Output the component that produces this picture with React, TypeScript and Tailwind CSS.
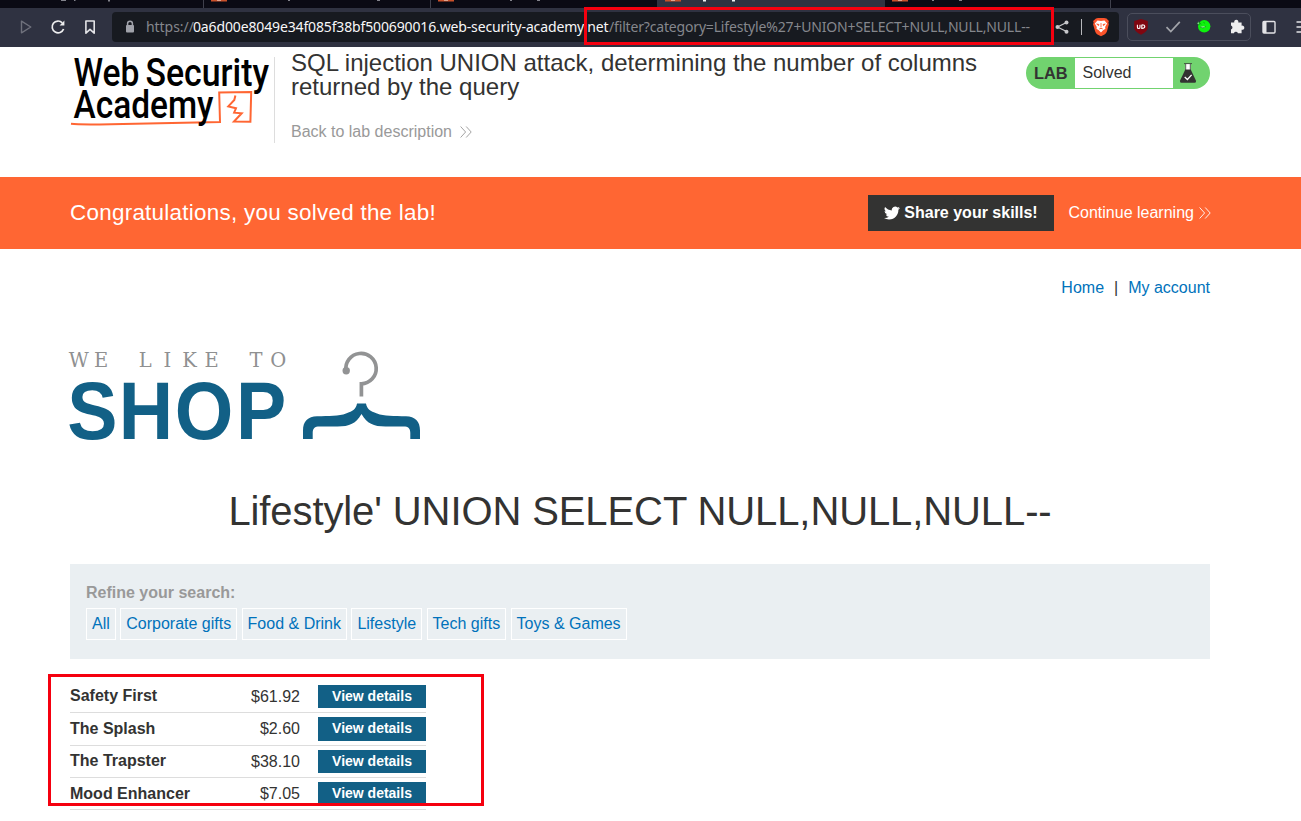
import React from "react";

const categories = ["All", "Corporate gifts", "Food & Drink", "Lifestyle", "Tech gifts", "Toys & Games"];

const products = [
  { name: "Safety First", price: "$61.92" },
  { name: "The Splash", price: "$2.60" },
  { name: "The Trapster", price: "$38.10" },
  { name: "Mood Enhancer", price: "$7.05" },
];

function TabStrip() {
  return (
    <div className="h-2 w-full bg-[#0a0a14]">
      <svg width="1301" height="8" viewBox="0 0 1301 8">
        <rect x="657" width="228" height="8" fill="#2f3241" />
        <g fill="#3f404c">
          <rect x="203" width="1" height="8" />
          <rect x="430" width="1" height="8" />
          <rect x="1110" width="1" height="8" />
        </g>
        <g fill="#c9502a">
          <rect x="211" width="16" height="1.5" />
          <rect x="438" width="16" height="1.5" />
          <rect x="665" width="16" height="1.5" />
          <rect x="892" width="16" height="1.5" />
        </g>
        <g fill="#e0a48e">
          <rect x="217" width="4" height="1" />
          <rect x="444" width="4" height="1" />
          <rect x="671" width="4" height="1" />
          <rect x="898" width="4" height="1" />
        </g>
        <g fill="#82838c">
          <rect x="61" width="5" height="1" />
          <rect x="74" width="1.5" height="1" />
          <rect x="108" width="2" height="1.5" />
          <rect x="288" width="2" height="1" />
          <rect x="377" width="3" height="1" />
          <rect x="510" width="2" height="1" />
          <rect x="537" width="3" height="1" />
          <rect x="932" width="2" height="1" />
          <rect x="959" width="3" height="1" />
        </g>
        <g fill="#f1f1f4">
          <rect x="703" width="3" height="1.5" />
          <rect x="732" width="3" height="1.5" />
        </g>
      </svg>
    </div>
  );
}

function Toolbar() {
  return (
    <div className="flex h-[39px] w-full items-start bg-[#2f3241]">
      <svg className="mt-[9px] ml-[16px] shrink-0" width="84" height="20" viewBox="0 0 84 20" fill="none">
        <path d="M5.5 4.2v11.6L14.8 10z" stroke="#6f717c" strokeWidth="1.4" strokeLinejoin="round" />
        <path d="M46.3 5.8A5.9 5.9 0 1 0 47.6 12" stroke="#eeeeef" strokeWidth="1.7" />
        <path d="M48.4 3.6v4.8h-4.8z" fill="#eeeeef" />
        <path d="M69.9 4h8.3v12.2L74 12.4l-4.1 3.8z" stroke="#e3e3e6" strokeWidth="1.6" strokeLinejoin="round" />
      </svg>
      <div className="mt-1 ml-[12px] flex h-[30px] w-[1007px] shrink-0 items-center rounded bg-[#171a20]">
        <svg className="ml-[13px] shrink-0" width="10" height="14" viewBox="0 0 10 14">
          <path d="M2.6 6V3.6a2.4 2.4 0 0 1 4.8 0V6" fill="none" stroke="#a0a2aa" strokeWidth="1.5" />
          <rect x="1" y="5" width="8" height="7.4" rx="1" fill="#a0a2aa" />
        </svg>
        <div className="ml-[11px] flex w-[906px] shrink-0 font-['Noto_Sans',sans-serif] text-[14px] leading-[20px] whitespace-nowrap text-[#85878d]">
          <span className="w-[47px] tracking-[-0.05px]">https://</span>
          <span className="w-[416px] tracking-[-0.14px] text-[#f7f7f8]">0a6d00e8049e34f085f38bf500690016.web-security-academy.net</span>
          <span className="tracking-[-0.17px]">/filter?category=Lifestyle%27+UNION+SELECT+NULL,NULL,NULL--</span>
        </div>
        <svg className="ml-[3px] shrink-0" width="64" height="24" viewBox="0 0 64 24">
          <path d="M11.5 7.5 2.5 12l9 4.5" fill="none" stroke="#c6c7ca" strokeWidth="1.3" />
          <circle cx="11.5" cy="7.5" r="2" fill="#c6c7ca" />
          <circle cx="2.5" cy="12" r="2" fill="#c6c7ca" />
          <circle cx="11.5" cy="16.7" r="2" fill="#c6c7ca" />
          <path d="M26.5 4v16" stroke="#b7b8bc" />
          <path d="m41 3.5 2-.5h6l2.5.5 2.4 2.6-.6 2 .6 1-2 7.5q-.7 2-2.4 3L46 21.3l-3.5-1.8q-1.7-1-2.3-3L38 9.1l.7-1-.6-2z" fill="#fb542b" />
          <path d="m42.5 5.6 3.5.5 3.5-.5 2.6 3-2 3.5.3 1.7-2.3 1.5L46 17.6l-2.2-2.3-2.3-1.5.3-1.7-2-3.5z" fill="#fff" />
          <path d="m41.7 9 2.3.5-.4 1.1zm8.6 0-2.3.5.4 1.1zM44.3 14l1.7-1 1.7 1M46 8v4" fill="#fb542b" stroke="#fb542b" strokeWidth=".8" />
        </svg>
      </div>
      <div className="mt-[5px] ml-[8px] flex h-[28px] w-[124px] shrink-0 items-center rounded-[5px] border border-[#4b4e5c]">
        <svg width="122" height="26" viewBox="0 0 122 26">
          <path d="m13 5 6.8 2v6.5q0 4-6.8 7.3-6.8-3.3-6.8-7.3V7z" fill="#800610" />
          <path d="M9.4 10.7v2.5q0 1.3 1.3 1.3t1.3-1.3v-2.5m1.8 0v3.8q3 0 3-1.9t-3-1.9" fill="none" stroke="#fff" strokeWidth="1.1" />
          <path d="m38.5 13.2 4.3 4.3 9-9.7" fill="none" stroke="#a3a5ab" strokeWidth="1.7" />
          <circle cx="76.2" cy="12.3" r="6.2" fill="#0df20d" />
          <path d="m71 7.5-2 2 2 1.5zm1 1.8 1.3 1.1m2.2-2 1.3.8m-4.8 3.6q3 2.5 6-.6" fill="#baffba" stroke="#076c16" strokeWidth=".6" />
          <path d="M103 8.4h3.3a2.1 2.1 0 1 1 4 0h3.3v3.3a2.1 2.1 0 1 1 0 4v3.6h-3.7a2.1 2.1 0 0 0-4 0H103v-3.7a2.1 2.1 0 0 0 0-4z" fill="#ededee" />
        </svg>
      </div>
      <svg className="mt-[8px] ml-[7px] shrink-0" width="43" height="22" viewBox="0 0 43 22">
        <rect x="5" y="5.5" width="12" height="11.5" rx="1" fill="none" stroke="#e3e3e6" strokeWidth="1.4" />
        <rect x="5" y="5.5" width="3.5" height="11.5" fill="#e3e3e6" />
        <path d="M38.5 6h5m-5 5h5m-5 5h5" stroke="#e3e3e6" strokeWidth="1.5" />
      </svg>
    </div>
  );
}

function AcademyLogo() {
  return (
    <svg className="shrink-0 overflow-visible" width="204" height="96" viewBox="70 47 204 96">
      <g fill="none" stroke="#ff6633" strokeWidth="2">
        <path d="M71 123.8q8 1 40 .4 60-1.5 109-2.3l-.8-29.4 32-.5-.8 29.7-16.4-.2 7.7-8.2-7.6-.6 1.9-4.4-7.7-1.900 6-6.400 1.100-4.500" />
      </g>
      <g className="font-['Roboto',sans-serif] font-medium" fontSize="38.5">
        <text x="73.5" y="85.8" textLength="66" lengthAdjust="spacingAndGlyphs">Web</text>
        <text x="145.5" y="85.8" textLength="123.5" lengthAdjust="spacingAndGlyphs">Security</text>
        <text x="73.5" y="117.8" textLength="140" lengthAdjust="spacingAndGlyphs">Academy</text>
      </g>
    </svg>
  );
}

function Chevrons({ className }: { className: string }) {
  return (
    <svg className={className} width="12" height="12" viewBox="0 0 12 12" fill="none" stroke="currentColor" strokeWidth=".9">
      <path d="m.6.5 5 5.5-5 5.5M6.2.5l5 5.5-5 5.5" />
    </svg>
  );
}

function LabStatus() {
  return (
    <div className="mt-[10px] flex h-[32px] w-[184px] shrink-0 items-center overflow-hidden rounded-full bg-[#71d36f]">
      <span className="w-[49px] pl-[8px] text-[16.4px] leading-[30px] font-bold">LAB</span>
      <span className="h-[30px] w-[98px] bg-white pl-[7.5px] text-[16px] leading-[29px]">Solved</span>
      <svg className="ml-[6px]" width="18" height="22" viewBox="0 0 18 22">
        <path d="M6.3 2v7h5.4V2z" fill="#fff" />
        <path d="M5 1.6h8M6.7 2v6.2M11.3 2v6.2" stroke="#333332" strokeWidth=".8" />
        <path d="M6.3 7.5h5.4l5.2 11.1q.7 2.2-1.2 2.2H2.3q-1.9 0-1.2-2.2z" fill="#333332" />
        <path d="m5.7 15 2.7 2.5 4.2-4.6" fill="none" stroke="#fff" strokeWidth="1.3" />
      </svg>
    </div>
  );
}

function ShopLogo() {
  return (
    <svg className="shrink-0 overflow-visible" width="352" height="92" viewBox="70 350 352 92">
      <text
        className="font-['DejaVu_Serif',serif] [font-stretch:normal]"
        fontSize="19.5"
        y="367.4"
        x="78.8 101 123 145.2 167.4 189.5 211.5 234 256 278.2"
        textAnchor="middle"
        fill="#8f9091"
      >
        WE LIKE TO
      </text>
      <text transform="scale(.93 1)" className="font-['Liberation_Sans',sans-serif] font-bold" fontSize="81" y="439" x="72.4 127.8 188 253.7" fill="#126086">
        SHOP
      </text>
      <path d="M346 371a15.2 15.2 0 1 1 15.4 12.8v12.7" fill="none" stroke="#929394" strokeWidth="3.7" />
      <circle cx="346.2" cy="370.8" r="3.7" fill="#929394" />
      <path
        d="M303 439v-8.5c0-9.5 5-14 14-14.3 12-.6 22 .2 29-2.8 7-2.5 10-4.5 11-10h9c1 5.5 4 7.5 11 10 7 3 17 2.2 29 2.8 9 .3 14 4.8 14 14.3v8.5h-9.7v-6c0-4.6-2-6.5-6.8-6.5h-18c-12 0-18.5-3-24-12.5-5.5 9.5-12 12.5-24 12.5h-18c-4.8 0-6.8 1.9-6.8 6.5v6z"
        fill="#126086"
      />
    </svg>
  );
}

export default function App() {
  return (
    <div className="relative h-[821px] w-[1301px] overflow-hidden bg-white font-['Liberation_Sans',Arial,sans-serif] text-[16px] text-[#333332]">
      <TabStrip />
      <Toolbar />

      <header className="flex h-[130px] items-start px-[70px] pr-[91px]">
        <AcademyLogo />
        <div className="mt-[10px] h-[86px] w-px shrink-0 bg-[#dddddd]" />
        <div className="ml-4 w-[735px] shrink-0 pt-[4px]">
          <h1 className="text-[24px] leading-[24px]">
            SQL injection UNION attack, determining the number of columns
            <br />
            returned by the query
          </h1>
          <a className="mt-[23px] flex items-center leading-[20px] text-[#999999]">
            Back to lab description
            <Chevrons className="mb-px ml-[8px]" />
          </a>
        </div>
        <LabStatus />
      </header>

      <section className="flex h-[72px] items-center bg-[#ff6633] pr-[91px] pl-[70px] text-white">
        <p className="flex-1 text-[22.4px] tracking-[0.28px]">Congratulations, you solved the lab!</p>
        <button className="flex h-[36px] w-[186px] items-center justify-center gap-[4px] bg-[#333332] text-[16px] font-bold whitespace-nowrap">
          <svg width="16" height="16" viewBox="0 0 24 24" fill="#fff">
            <path d="M23.95 4.57a10 10 0 0 1-2.82.77 4.96 4.96 0 0 0 2.16-2.72c-.95.55-2 .95-3.13 1.18a4.92 4.92 0 0 0-8.38 4.48C7.69 8.1 4.07 6.13 1.64 3.16a4.92 4.92 0 0 0 1.52 6.57 4.9 4.9 0 0 1-2.23-.61v.06a4.92 4.92 0 0 0 3.95 4.83 5 5 0 0 1-2.21.08 4.94 4.94 0 0 0 4.6 3.42A9.87 9.87 0 0 1 0 19.54a13.99 13.99 0 0 0 7.55 2.21c9.05 0 14-7.5 14-13.98 0-.21 0-.42-.02-.63a9.94 9.94 0 0 0 2.46-2.55z" />
          </svg>
          Share your skills!
        </button>
        <a className="ml-[14.5px] flex w-[141.5px] items-center whitespace-nowrap">
          Continue learning
          <Chevrons className="ml-[5px] shrink-0" />
        </a>
      </section>

      <main className="pr-[91px] pl-[70px]">
        <nav className="flex h-[76px] items-center justify-end pt-[2px] text-[#0072bb]">
          <a>Home</a>
          <span className="mx-[10px] text-[#333332]">|</span>
          <a>My account</a>
        </nav>
        <div className="pt-[25px]">
          <ShopLogo />
        </div>
        <h2 className="mt-[45px] text-center text-[40px] leading-[48px] tracking-[-0.1px]">Lifestyle' UNION SELECT NULL,NULL,NULL--</h2>

        <section className="mt-[29px] h-[95px] bg-[#eaeff2] px-4 pt-[19px]">
          <p className="leading-[20px] font-bold text-[#999999]">Refine your search:</p>
          <div className="mt-[5px] flex gap-[4.45px]">
            {categories.map((name) => (
              <a key={name} className="h-[32px] border border-white px-[5px] leading-[29px] whitespace-nowrap text-[#0072bb]">
                {name}
              </a>
            ))}
          </div>
        </section>

        <section className="w-[356px] pt-[21.8px]">
          {products.map((product) => (
            <div key={product.name} className="flex h-[32.4px] items-center border-b border-[#dddddd]">
              <span className="w-[150px] font-bold">{product.name}</span>
              <span className="w-[80px] pt-px text-right">{product.price}</span>
              <a className="ml-[18px] h-[23.4px] w-[108px] bg-[#126086] text-center text-[14px] leading-[22.5px] font-bold text-white">View details</a>
            </div>
          ))}
        </section>
      </main>

      <div className="absolute top-[7px] left-[584px] h-[38px] w-[470px] border-[3px] border-[#f5000f]" />
      <div className="absolute top-[674px] left-[47.5px] h-[132px] w-[436px] border-[3px] border-[#f5000f]" />
    </div>
  );
}
